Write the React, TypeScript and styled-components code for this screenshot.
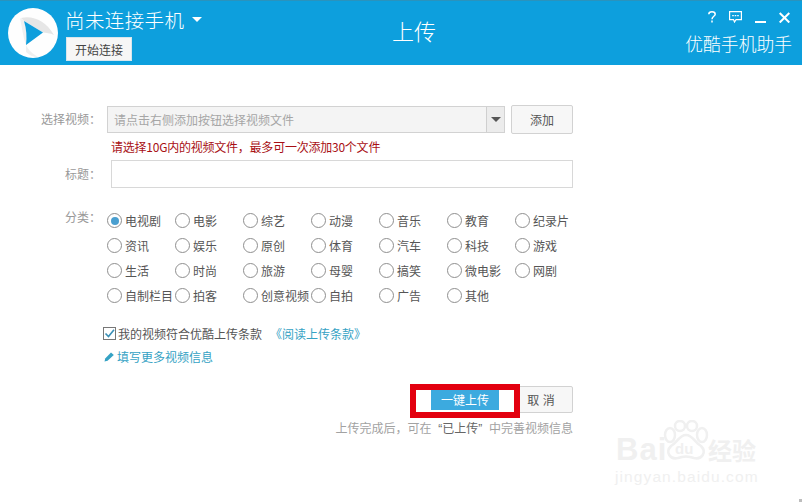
import React from "react";
import styled, { createGlobalStyle } from "styled-components";

const Global = createGlobalStyle`
  html, body { margin: 0; padding: 0; background: #fff; }
  body { font-family: "Noto Sans CJK SC", "Liberation Sans", sans-serif; }
  * { box-sizing: border-box; }
`;

const Page = styled.div`
  position: relative;
  width: 802px;
  height: 502px;
  overflow: hidden;
  background: #fff;
`;

const Header = styled.header`
  display: grid;
  grid-template-columns: 392px 44px 1fr;
  height: 65px;
  background: #0d9fdd;
  border-top: 1px solid #2a93bd;
  color: #fff;
`;

const Brand = styled.div`
  display: flex;
  gap: 8px;
  padding: 7px 0 0 8px;
`;

const Device = styled.div`
  display: flex;
  flex-direction: column;
  align-items: flex-start;
  gap: 7px;
`;

const DeviceName = styled.div`
  display: flex;
  align-items: center;
  gap: 8px;
  height: 22px;
  margin-left: -1px;
  font-size: 19.5px;
  font-weight: 300;
  letter-spacing: 0.4px;
`;

const Caret = styled.span`
  width: 0;
  height: 0;
  border-left: 5px solid transparent;
  border-right: 5px solid transparent;
  border-top: 5px solid #fff;
`;

const ConnectButton = styled.button`
  width: 66px;
  height: 24px;
  padding: 0;
  border: 1px solid #d8e6ec;
  background: #f6f6f6;
  color: #444;
  font: 12px "Noto Sans CJK SC", sans-serif;
`;

const PageTitle = styled.h1`
  margin: 0;
  align-self: start;
  padding-top: 15px;
  font-size: 22px;
  font-weight: 300;
  line-height: 28px;
  white-space: nowrap;
`;

const HeaderRight = styled.div`
  display: flex;
  flex-direction: column;
  align-items: flex-end;
  padding: 10px 10px 0 0;
`;

const WindowControls = styled.div`
  display: flex;
  align-items: flex-start;
  height: 18px;
  gap: 13px;
  padding-right: 2px;
`;

const Assistant = styled.div`
  margin-top: 2px;
  font-size: 17.8px;
  font-weight: 300;
  line-height: 24px;
  white-space: nowrap;
`;

const Form = styled.main`
  display: flex;
  flex-direction: column;
  padding: 40px 229px 0 0;
`;

const Row = styled.div`
  display: grid;
  grid-template-columns: 107px 1fr;
`;

const Label = styled.label`
  justify-self: end;
  padding-right: 6px;
  color: #999;
  font-size: 12px;
  line-height: 28px;
  white-space: nowrap;
`;

const FileRow = styled.div`
  display: flex;
  gap: 6px;
  height: 29px;
`;

const FileSelect = styled.div`
  flex: 1;
  display: flex;
  margin-top: 1px;
  height: 27px;
  border: 1px solid #d2d2d2;
  background: #f4f4f4;
  color: #a6a6a6;
  font-size: 12px;
  line-height: 26px;
`;

const FilePlaceholder = styled.span`
  flex: 1;
  padding-left: 6px;
`;

const SelectArrow = styled.span`
  width: 18px;
  display: flex;
  align-items: center;
  justify-content: center;
  border-left: 1px solid #cfcfcf;
  background: #ececec;

  &::after {
    content: "";
    border-left: 5px solid transparent;
    border-right: 5px solid transparent;
    border-top: 5px solid #555;
  }
`;

const GreyButton = styled.button`
  width: 62px;
  padding: 0;
  border: 1px solid #d2d2d2;
  border-radius: 2px;
  background: #f7f7f7;
  color: #555;
  font: 12px "Noto Sans CJK SC", sans-serif;
`;

const CancelButton = styled(GreyButton)`
  width: 59px;
  padding-right: 5px;
  word-spacing: 1px;
`;

const Hint = styled.p`
  margin: 4px 0 0 4px;
  color: #a80f14;
  font-size: 12px;
  letter-spacing: -0.23px;
  line-height: 18px;
  height: 22px;
  white-space: nowrap;
`;

const TitleInput = styled.div`
  height: 28px;
  margin-left: 4px;
  border: 1px solid #d8d8d8;
  background: #fff;
`;

const CategoryRow = styled(Row)`
  margin-top: 20px;
`;

const CategoryLabel = styled(Label)`
  line-height: 26px;
  margin-top: -4px;
`;

const RadioGrid = styled.div`
  display: grid;
  grid-template-columns: repeat(7, 68px);
  grid-auto-rows: 25px;
  width: 476px;
`;

const RadioItem = styled.div`
  display: flex;
  align-items: center;
  gap: 3px;
  color: #555;
  font-size: 12px;
  white-space: nowrap;
`;

const RadioDot = styled.span<{ $on?: boolean }>`
  flex: none;
  display: flex;
  align-items: center;
  justify-content: center;
  width: 15px;
  height: 15px;
  border: 1px solid #8f8f8f;
  border-radius: 50%;
  background: #fff;

  &::after {
    content: "";
    display: ${(p) => (p.$on ? "block" : "none")};
    width: 8px;
    height: 8px;
    border-radius: 50%;
    background: #4a9fd0;
  }
`;

const AgreeRow = styled.div`
  display: flex;
  align-items: center;
  margin: 16px 0 0 103px;
  height: 18px;
  color: #555;
  font-size: 12px;
  white-space: nowrap;
`;

const CheckBox = styled.span`
  display: flex;
  width: 13px;
  height: 13px;
  margin-right: 2px;
  border: 1px solid #777;
  background: #fff;
`;

const LinkText = styled.span`
  color: #35a2c4;
`;

const AgreeLink = styled(LinkText)`
  margin-left: 8px;
`;

const MoreRow = styled.div`
  display: flex;
  align-items: center;
  gap: 2px;
  margin: 5px 0 0 104px;
  height: 18px;
  font-size: 12px;
  white-space: nowrap;
`;

const ActionRow = styled.div`
  display: flex;
  justify-content: flex-end;
  margin-top: 21px;
`;

const UploadButton = styled.button`
  width: 98px;
  height: 27px;
  padding: 0 15px 0 15px;
  border: none;
  background: #fff;
  font: 12px "Noto Sans CJK SC", sans-serif;
  color: #fff;
`;

const UploadLabel = styled.span`
  display: block;
  height: 21px;
  line-height: 21px;
  background: #3caadf;
`;

const Note = styled.p`
  margin: 6px 0 0;
  text-align: right;
  color: #a2a2a2;
  font-size: 12px;
  word-spacing: 4px;
  line-height: 18px;
  white-space: nowrap;
`;

const NoteStrong = styled.span`
  color: #666;
  font-family: "Liberation Sans", "Noto Sans CJK SC", sans-serif;
`;

const RedFrame = styled.div`
  position: absolute;
  left: 410px;
  top: 384px;
  width: 110px;
  height: 34px;
  border: 6px solid #e3000f;
  pointer-events: none;
`;

const ResizeGrip = styled.div`
  position: absolute;
  right: 0;
  bottom: 0;
  width: 3px;
  height: 3px;
  background: #bdbdbd;
`;

const Watermark = styled.div`
  position: absolute;
  left: 612px;
  top: 420px;
  width: 180px;
  height: 70px;
  color: #f0f0f0;
`;

const WmBai = styled.span`
  position: absolute;
  left: 4px;
  top: 12px;
  font: 700 31px "Liberation Sans", sans-serif;
  letter-spacing: 1px;
`;

const WmCn = styled.span`
  position: absolute;
  left: 96px;
  top: 15px;
  font-size: 24px;
  line-height: 30px;
  font-weight: 700;
`;

const WmUrl = styled.span`
  position: absolute;
  left: 3px;
  top: 48px;
  font: 15.5px "Liberation Sans", sans-serif;
  letter-spacing: 1.1px;
`;

const WmPaw = styled.svg`
  position: absolute;
  left: 51px;
  top: 0;
`;

const WmDu = styled.span`
  position: absolute;
  left: 63px;
  top: 20px;
  font: 700 15px "Liberation Sans", sans-serif;
`;

const rows = [
  ["电视剧", "电影", "综艺", "动漫", "音乐", "教育", "纪录片"],
  ["资讯", "娱乐", "原创", "体育", "汽车", "科技", "游戏"],
  ["生活", "时尚", "旅游", "母婴", "搞笑", "微电影", "网剧"],
  ["自制栏目", "拍客", "创意视频", "自拍", "广告", "其他"],
];

const Logo = () => (
  <svg width="50" height="50" viewBox="0 0 50 50">
    <circle cx="25" cy="25" r="25" fill="#fefefe" />
    <path d="M13 10 C25 7 38 13 46 27 C42 25 38 25 35 24.5 L16 13 Z" fill="#e6e6e6" />
    <path d="M18 37 C20 42 25 46 30 49 C25 49 21 47 18 44 Z" fill="#efefef" />
    <path d="M12 10 L16 13 C18.5 21 19 29 18 37 C15 29 14 19 12 10 Z" fill="#f0f0f0" />
    <path d="M16 13 L35 24.5 L18 37 C19 29 18.5 21 16 13 Z" fill="#0e9edc" />
  </svg>
);

export default function App() {
  return (
    <Page>
      <Global />
      <Header>
        <Brand>
          <Logo />
          <Device>
            <DeviceName>
              尚未连接手机
              <Caret />
            </DeviceName>
            <ConnectButton>开始连接</ConnectButton>
          </Device>
        </Brand>
        <PageTitle>上传</PageTitle>
        <HeaderRight>
          <WindowControls>
            <svg width="8" height="12" viewBox="0 0 8 12" fill="none" stroke="#fff" strokeWidth="1.5">
              <path d="M0.8 3.2 C0.8 0 7.2 0 7.2 3.2 C7.2 5.4 4 5.2 4 8.2" />
              <path d="M4 9.6 V11.6" />
            </svg>
            <svg width="13" height="12" viewBox="0 0 13 12" fill="none" stroke="#fff" strokeWidth="1.2">
              <path d="M0.6 0.6 H12.4 V8.6 H7 L5.5 11 L4.5 8.6 H0.6 Z" />
              <path d="M3.2 4.6 H4.8 M5.7 4.6 H7.3 M8.2 4.6 H9.8" />
            </svg>
            <svg width="11" height="12" viewBox="0 0 11 12" fill="none" stroke="#fff" strokeWidth="2">
              <path d="M0 11 H11" />
            </svg>
            <svg width="11" height="12" viewBox="0 0 11 12" fill="none" stroke="#fff" strokeWidth="2">
              <path d="M0.7 2 L10.3 11.5 M10.3 2 L0.7 11.5" />
            </svg>
          </WindowControls>
          <Assistant>优酷手机助手</Assistant>
        </HeaderRight>
      </Header>

      <Form>
        <Row>
          <Label>选择视频：</Label>
          <div>
            <FileRow>
              <FileSelect>
                <FilePlaceholder>请点击右侧添加按钮选择视频文件</FilePlaceholder>
                <SelectArrow />
              </FileSelect>
              <GreyButton>添加</GreyButton>
            </FileRow>
            <Hint>请选择10G内的视频文件，最多可一次添加30个文件</Hint>
          </div>
        </Row>
        <Row>
          <Label>标题：</Label>
          <TitleInput />
        </Row>
        <CategoryRow>
          <CategoryLabel>分类：</CategoryLabel>
          <RadioGrid>
            {rows.flat().map((name, i) => (
              <RadioItem key={name}>
                <RadioDot $on={i === 0} />
                {name}
              </RadioItem>
            ))}
          </RadioGrid>
        </CategoryRow>
        <AgreeRow>
          <CheckBox>
            <svg width="11" height="11" viewBox="0 0 11 11" fill="none" stroke="#3a8fb5" strokeWidth="1.6">
              <path d="M1.5 5.5 L4.5 8.5 L10 1.8" />
            </svg>
          </CheckBox>
          我的视频符合优酷上传条款
          <AgreeLink>《阅读上传条款》</AgreeLink>
        </AgreeRow>
        <MoreRow>
          <svg width="11" height="11" viewBox="0 0 11 11" fill="#35a2c4">
            <path d="M0.5 10.5 L1.2 7.5 L7 1.5 L9.8 4 L3.6 9.8 Z" />
          </svg>
          <LinkText>填写更多视频信息</LinkText>
        </MoreRow>
        <ActionRow>
          <UploadButton>
            <UploadLabel>一键上传</UploadLabel>
          </UploadButton>
          <CancelButton>取 消</CancelButton>
        </ActionRow>
        <Note>
          上传完成后，可在 <NoteStrong>“已上传”</NoteStrong> 中完善视频信息
        </Note>
      </Form>

      <RedFrame />
      <ResizeGrip />
      <Watermark>
        <WmPaw width="46" height="42" viewBox="0 0 46 42" fill="none" stroke="#f0f0f0" strokeWidth="2.5">
          <ellipse cx="7" cy="15" rx="5" ry="7" />
          <ellipse cx="17" cy="6" rx="5" ry="5" />
          <ellipse cx="29" cy="6" rx="5" ry="5" />
          <ellipse cx="39" cy="15" rx="5" ry="7" />
          <path d="M23 15 C30 15 31 22 38 26 C44 32 39 40 31 38 C26 36 20 36 15 38 C7 40 2 32 8 26 C15 22 16 15 23 15 Z" />
        </WmPaw>
        <WmDu>du</WmDu>
        <WmBai>Bai</WmBai>
        <WmCn>经验</WmCn>
        <WmUrl>jingyan.baidu.com</WmUrl>
      </Watermark>
    </Page>
  );
}
